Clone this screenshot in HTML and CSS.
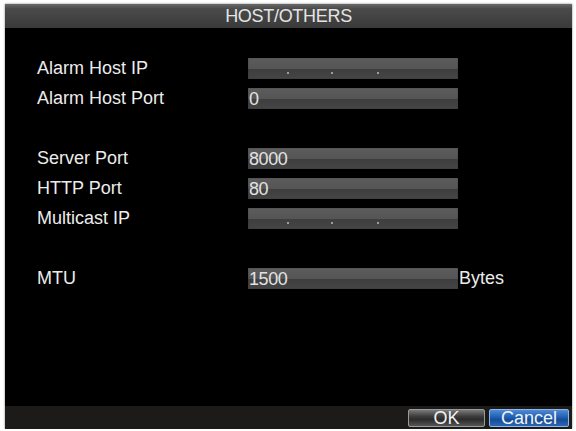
FILE: index.html
```html
<!DOCTYPE html>
<html lang="en">
<head>
  <meta charset="UTF-8" />
  <title>HOST/OTHERS</title>
  <link rel="stylesheet" href="styles.css">
</head>
<body>

  <div class="window">
    <div class="title-bar">HOST/OTHERS</div>

    <div class="content">
      <!-- alarm host -->
      <div class="group">
        <div class="row">
          <label>Alarm Host IP</label>
          <div class="field ip"><span></span><span></span><span></span></div>
        </div>
        <div class="row">
          <label>Alarm Host Port</label>
          <div class="field">0</div>
        </div>
      </div>

      <!-- ports -->
      <div class="group">
        <div class="row">
          <label>Server Port</label>
          <div class="field">8000</div>
        </div>
        <div class="row">
          <label>HTTP Port</label>
          <div class="field">80</div>
        </div>
        <div class="row">
          <label>Multicast IP</label>
          <div class="field ip"><span></span><span></span><span></span></div>
        </div>
      </div>

      <div class="group">
        <div class="row">
          <label>MTU</label>
          <div class="field">1500</div>
          <span class="unit">Bytes</span>
        </div>
      </div>
    </div>

    <div class="footer">
      <button class="btn">OK</button>
      <button class="btn btn-blue">Cancel</button>
    </div>
  </div>

</body>
</html>
```

FILE: styles.css
```css
body {
  margin: 0;
  background-color: #fff;
  font-family: "Liberation Sans", Arial, sans-serif;
}

.window {
  margin: 4px 0 0 5px;
  width: 567px;
  height: 425px;
  display: flex;
  flex-direction: column;
  background-color: #000;
  box-shadow: 0 0 2px rgba(0,0,0,0.5);
}

.title-bar {
  height: 24px;
  line-height: 25px;
  text-align: center;
  color: #e4e4e4;
  font-size: 18px;
  letter-spacing: -0.3px;
  background: linear-gradient(#6a6a6a, #4a4a4a 20%, #3a3a3a);
}

.content {
  flex: 1;
  padding: 30px 0 0 32px;
}

.group {
  display: flex;
  flex-direction: column;
  gap: 9px;
  margin-bottom: 39px;
}

.row {
  display: flex;
  align-items: center;
  height: 21px;
}

label {
  width: 211px;
  color: #ececec;
  font-size: 18px;
}

.field {
  width: 209px;
  height: 21px;
  line-height: 22px;
  padding-left: 1px;
  color: #e2e2e2;
  font-size: 18px;
  letter-spacing: -0.4px;
  background: linear-gradient(#5c5c5c, #555 50%, #3e3e3e 52%, #454545);
  box-shadow: inset 0 0 1px #222;
}

.field.ip {
  position: relative;
}

.field.ip span {
  position: absolute;
  top: 14px;
  width: 2px;
  height: 2px;
  border-radius: 1px;
  background-color: #bbb;
}

.field.ip span:nth-child(1) { left: 39px; }
.field.ip span:nth-child(2) { left: 83px; }
.field.ip span:nth-child(3) { left: 129px; }

.unit {
  margin-left: 1px;
  color: #ececec;
  font-size: 18px;
}

.footer {
  height: 23px;
  display: flex;
  justify-content: flex-end;
  align-items: center;
  gap: 4px;
  padding-right: 3px;
  background-color: #1d1b19;
}

.btn {
  width: 77px;
  height: 18px;
  padding: 0;
  border: 1px solid #9a9a9a;
  border-radius: 2px;
  color: #f2f2f2;
  font-family: "Liberation Sans", Arial, sans-serif;
  font-size: 18px;
  line-height: 16px;
  background: linear-gradient(#7a7a7a, #3c3c3c 40%, #2c2c2c 60%, #555);
}

.btn-blue {
  width: 80px;
  border-color: #8fb4e6;
  background: linear-gradient(#4f8ad6, #1f5fb4 45%, #174c96 60%, #2a66b8);
}
```
